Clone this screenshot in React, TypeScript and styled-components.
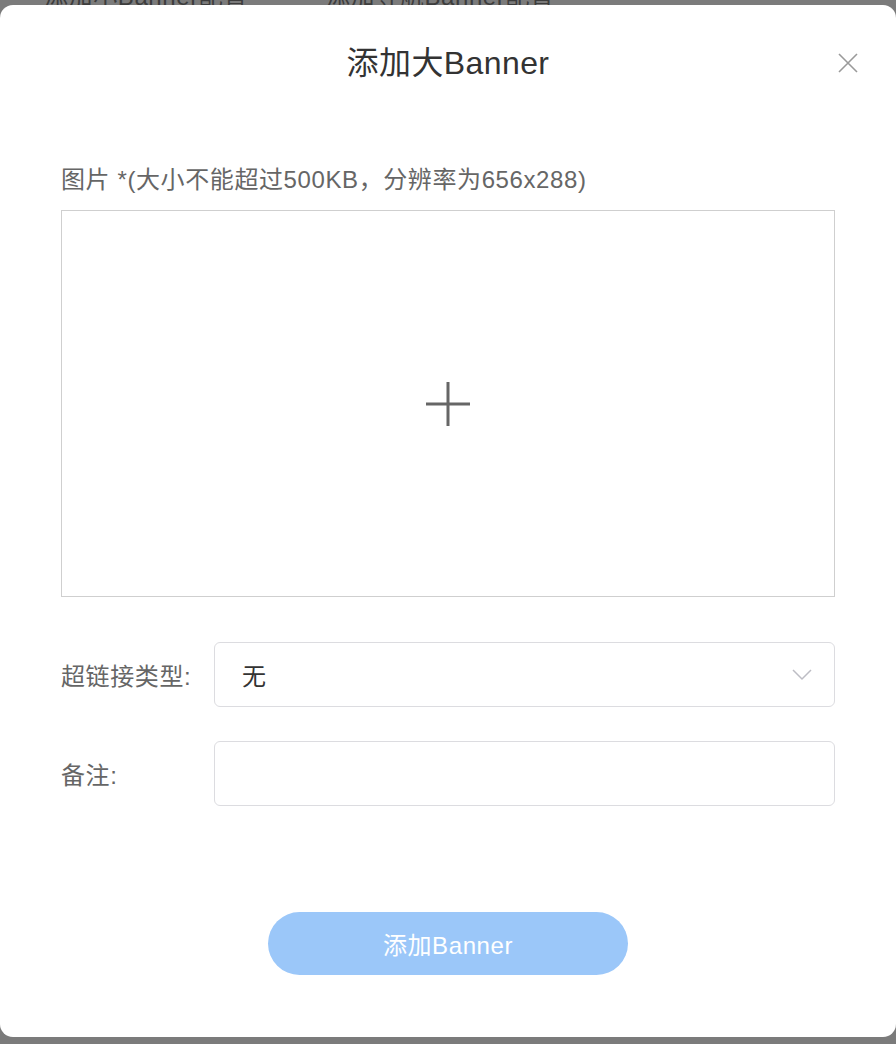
import React, { useState } from 'react';
import styled, { createGlobalStyle } from 'styled-components';

const GlobalStyle = createGlobalStyle`
  html, body {
    margin: 0;
    padding: 0;
    background: #7b7b7b;
    font-family: "Liberation Sans", "Noto Sans CJK SC", sans-serif;
  }
  * {
    box-sizing: border-box;
  }
`;

const Page = styled.div`
  width: 896px;
  height: 1044px;
  overflow: hidden;
  background: #7b7b7b;
  letter-spacing: 0.6px;
`;

const BehindTabs = styled.div`
  height: 5px;
  overflow: hidden;
  display: flex;
  gap: 78px;
  padding-left: 44px;
`;

const BehindTab = styled.span`
  font-size: 24px;
  line-height: 24px;
  margin-top: -15px;
  color: #3d3d3d;
  white-space: nowrap;
`;

const Modal = styled.div`
  position: relative;
  width: 896px;
  height: 1032px;
  background: #fff;
  border-radius: 13px;
  padding: 38px 61px 0;
  display: flex;
  flex-direction: column;
`;

const Title = styled.h2`
  margin: 0;
  font-size: 32px;
  line-height: 40px;
  font-weight: 400;
  letter-spacing: 0.4px;
  color: #333;
  text-align: center;
`;

const CloseButton = styled.button`
  position: absolute;
  top: 42px;
  right: 32px;
  width: 32px;
  height: 32px;
  padding: 0;
  border: none;
  background: none;
  cursor: pointer;
  display: flex;
  align-items: center;
  justify-content: center;
`;

const FieldLabel = styled.div`
  margin-top: 82px;
  font-size: 24px;
  line-height: 30px;
  color: #666;
`;

const UploadBox = styled.label`
  margin-top: 15px;
  height: 387px;
  border: 1px solid #cfcfcf;
  display: flex;
  align-items: center;
  justify-content: center;
  cursor: pointer;
`;

const Form = styled.div`
  margin-top: 45px;
  display: flex;
  flex-direction: column;
  gap: 34px;
`;

const Row = styled.div`
  display: flex;
  align-items: center;
`;

const RowLabel = styled.span`
  width: 153px;
  flex-shrink: 0;
  font-size: 24px;
  color: #666;
`;

const Control = styled.div`
  position: relative;
  flex: 1;
  height: 65px;
  border: 1px solid #dcdce0;
  border-radius: 6px;
  display: flex;
  align-items: center;
  padding: 0 22px 0 27px;
`;

const SelectValue = styled.span`
  flex: 1;
  font-size: 24px;
  color: #333;
`;

const TextInput = styled.input`
  flex: 1;
  border: none;
  outline: none;
  height: 100%;
  font-size: 24px;
  font-family: inherit;
  color: #333;
  background: transparent;
`;

const Footer = styled.div`
  margin-top: 106px;
  display: flex;
  justify-content: center;
`;

const SubmitButton = styled.button`
  width: 360px;
  height: 63px;
  border: none;
  border-radius: 32px;
  background: #9bc7f9;
  color: #fff;
  font-size: 24px;
  letter-spacing: 0.6px;
  font-family: inherit;
  cursor: pointer;
`;

const App: React.FunctionComponent = () => {
  const [remark, setRemark] = useState('');

  return (
    <Page>
      <GlobalStyle />
      <BehindTabs>
        <BehindTab>添加小Banner配置</BehindTab>
        <BehindTab>添加导航Banner配置</BehindTab>
      </BehindTabs>
      <Modal>
        <Title>添加大Banner</Title>
        <CloseButton aria-label="close">
          <svg width="20" height="20" viewBox="0 0 20 20">
            <path d="M1 1L19 19M19 1L1 19" stroke="#9a9a9a" strokeWidth="1.6" fill="none" />
          </svg>
        </CloseButton>

        <FieldLabel>图片 *(大小不能超过500KB，分辨率为656x288)</FieldLabel>
        <UploadBox>
          <svg width="46" height="46" viewBox="0 0 46 46">
            <path d="M23 1V45M1 23H45" stroke="#666" strokeWidth="3" fill="none" />
          </svg>
        </UploadBox>

        <Form>
          <Row>
            <RowLabel>超链接类型:</RowLabel>
            <Control>
              <SelectValue>无</SelectValue>
              <svg width="20" height="12" viewBox="0 0 20 12">
                <path d="M1 1L10 10L19 1" stroke="#bdbdc4" strokeWidth="1.5" fill="none" />
              </svg>
            </Control>
          </Row>
          <Row>
            <RowLabel>备注:</RowLabel>
            <Control>
              <TextInput value={remark} onChange={(e) => setRemark(e.target.value)} />
            </Control>
          </Row>
        </Form>

        <Footer>
          <SubmitButton>添加Banner</SubmitButton>
        </Footer>
      </Modal>
    </Page>
  );
};

export default App;
